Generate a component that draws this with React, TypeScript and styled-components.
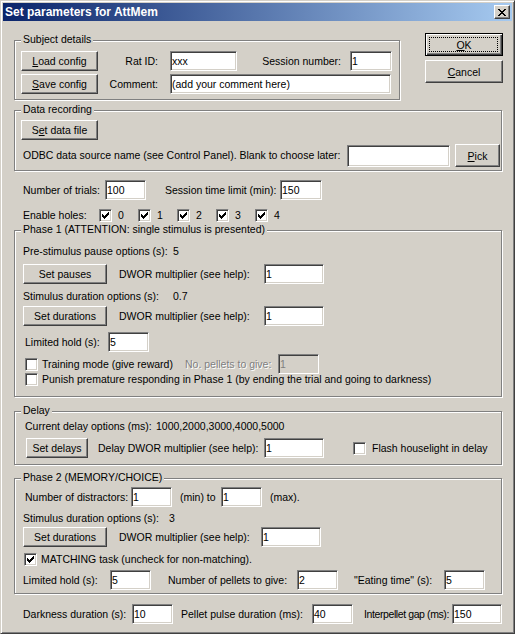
import React from 'react';
import styled, { createGlobalStyle, css } from 'styled-components';

const FACE = '#d4d0c8';

const GlobalStyle = createGlobalStyle`
  html, body {
    margin: 0;
    padding: 0;
    background: ${FACE};
  }
  body {
    font-family: 'Liberation Sans', Arial, sans-serif;
    font-size: 10.5px;
    color: #000;
  }
  * {
    box-sizing: border-box;
  }
`;

const Window = styled.div`
  width: 515px;
  height: 634px;
  background: ${FACE};
  border: 1px solid;
  border-color: ${FACE} #404040 #404040 ${FACE};
  box-shadow: inset 1px 1px #fff, inset -1px -1px #808080;
  padding: 2px;
  display: flex;
  flex-direction: column;
`;

const TitleBar = styled.div`
  flex: none;
  height: 18px;
  background: linear-gradient(to right, #0a246a, #a6caf0);
  display: flex;
  align-items: center;
  justify-content: space-between;
  padding: 0 2px 0 2px;
`;

const Title = styled.span`
  color: #fff;
  font-weight: bold;
  font-size: 12px;
  line-height: 14px;
`;

const CloseButton = styled.div`
  width: 16px;
  height: 14px;
  background: ${FACE};
  border: 1px solid;
  border-color: #fff #404040 #404040 #fff;
  box-shadow: inset -1px -1px #808080;
  display: flex;
  align-items: center;
  justify-content: center;
  padding-right: 1px;
`;

const Client = styled.div`
  flex: 1;
  display: flex;
  flex-direction: column;
  padding-left: 11px;
`;

const TopRow = styled.div`
  display: flex;
  align-items: flex-start;
`;

const ButtonColumn = styled.div`
  display: flex;
  flex-direction: column;
  gap: 4px;
  margin-top: 12px;
  margin-left: 25px;
`;

type GroupProps = { $w: number; $mt: number; $pt: number; $pb: number; $pl: number };

const Group = styled.div<GroupProps>`
  position: relative;
  flex: none;
  width: ${(p) => p.$w}px;
  margin-top: ${(p) => p.$mt}px;
  padding: ${(p) => p.$pt}px 0 ${(p) => p.$pb}px ${(p) => p.$pl}px;
  border: 1px solid #808080;
  box-shadow: inset 1px 1px #fff, 1px 1px #fff;
`;

const GroupLabel = styled.span`
  position: absolute;
  top: -8px;
  left: 6px;
  padding: 0 2px;
  line-height: 13px;
  background: ${FACE};
  white-space: nowrap;
`;

type RowProps = { $h?: number; $mt?: number; $ml?: number };

const Row = styled.div<RowProps>`
  flex: none;
  display: flex;
  align-items: center;
  white-space: nowrap;
  height: ${(p) => p.$h ?? 20}px;
  margin-top: ${(p) => p.$mt ?? 0}px;
  margin-left: ${(p) => p.$ml ?? 0}px;
`;

type LabelProps = { $w?: number; $ml?: number; $right?: boolean; $disabled?: boolean; $tight?: boolean };

const Label = styled.span<LabelProps>`
  flex: none;
  line-height: 13px;
  width: ${(p) => (p.$w ? `${p.$w}px` : 'auto')};
  margin-left: ${(p) => p.$ml ?? 0}px;
  text-align: ${(p) => (p.$right ? 'right' : 'left')};
  letter-spacing: ${(p) => (p.$tight ? '-0.4px' : 'normal')};
  ${(p) =>
    p.$disabled &&
    css`
      color: #808080;
      text-shadow: 1px 1px #fff;
    `}
`;

type FieldProps = { $w: number; $h?: number; $ml?: number };

const Field = styled.input.attrs({ type: 'text', spellCheck: false })<FieldProps>`
  flex: none;
  width: ${(p) => p.$w}px;
  height: ${(p) => p.$h ?? 20}px;
  margin: 0 0 0 ${(p) => p.$ml ?? 0}px;
  padding: 0 1px;
  font: inherit;
  color: #000;
  background: #fff;
  border: 1px solid;
  border-color: #808080 #fff #fff #808080;
  box-shadow: inset 1px 1px #404040, inset -1px -1px ${FACE};
  border-radius: 0;
  outline: none;

  &:disabled {
    background: ${FACE};
    color: #808080;
  }
`;

type ButtonProps = { $w: number; $h?: number; $ml?: number; $default?: boolean };

const Button = styled.button<ButtonProps>`
  position: relative;
  flex: none;
  width: ${(p) => p.$w}px;
  height: ${(p) => p.$h ?? 20}px;
  margin: 0 0 0 ${(p) => p.$ml ?? 0}px;
  padding: 0;
  font: inherit;
  color: #000;
  background: ${FACE};
  border-radius: 0;
  ${(p) =>
    p.$default
      ? css`
          border: 1px solid #000;
          box-shadow: inset 1px 1px #fff, inset -1px -1px #404040, inset -2px -2px #808080;

          &::before {
            content: '';
            position: absolute;
            inset: 3px 4px 3px 3px;
            border: 1px dotted #000;
          }
        `
      : css`
          border: 1px solid;
          border-color: #fff #404040 #404040 #fff;
          box-shadow: inset -1px -1px #808080;
        `}
`;

const CheckBox = styled.span<{ $ml?: number }>`
  flex: none;
  width: 13px;
  height: 13px;
  margin-left: ${(p) => p.$ml ?? 0}px;
  background: #fff;
  border: 1px solid;
  border-color: #808080 #fff #fff #808080;
  box-shadow: inset 1px 1px #404040, inset -1px -1px ${FACE};
  display: flex;
  align-items: center;
  justify-content: center;
`;

const HoleItem = styled.span`
  flex: none;
  width: 39px;
  display: flex;
  align-items: center;
`;

const CHECK_COLS = [2, 3, 4, 3, 2, 1, 0];

function Check({ checked, ml }: { checked?: boolean; ml?: number }) {
  return (
    <CheckBox $ml={ml}>
      {checked && (
        <svg width="7" height="7" viewBox="0 0 7 7" shapeRendering="crispEdges">
          {CHECK_COLS.map((top, i) => (
            <rect key={i} x={i} y={top} width="1" height="3" fill="#000" />
          ))}
        </svg>
      )}
    </CheckBox>
  );
}

const X_ROWS = [
  [0, 1, 6, 7],
  [1, 2, 5, 6],
  [2, 3, 4, 5],
  [3, 4],
  [2, 3, 4, 5],
  [1, 2, 5, 6],
  [0, 1, 6, 7],
];

function CloseGlyph() {
  return (
    <svg width="8" height="7" viewBox="0 0 8 7" shapeRendering="crispEdges">
      {X_ROWS.flatMap((cols, y) => cols.map((x) => <rect key={`${x}-${y}`} x={x} y={y} width="1" height="1" fill="#000" />))}
    </svg>
  );
}

export default function App() {
  return (
    <>
      <GlobalStyle />
      <Window>
        <TitleBar>
          <Title>Set parameters for AttMem</Title>
          <CloseButton>
            <CloseGlyph />
          </CloseButton>
        </TitleBar>
        <Client>
          <TopRow>
            <Group $w={386} $mt={19} $pt={10} $pb={5} $pl={6}>
              <GroupLabel>Subject details</GroupLabel>
              <Row>
                <Button $w={77}>
                  <u>L</u>oad config
                </Button>
                <Label $w={60} $right>
                  Rat ID:
                </Label>
                <Field $w={67} $ml={12} defaultValue="xxx" />
                <Label $w={104} $right>
                  Session number:
                </Label>
                <Field $w={42} $ml={9} defaultValue="1" />
              </Row>
              <Row $mt={3}>
                <Button $w={77}>
                  <u>S</u>ave config
                </Button>
                <Label $w={60} $right>
                  Comment:
                </Label>
                <Field $w={221} $ml={12} defaultValue="(add your comment here)" />
              </Row>
            </Group>
            <ButtonColumn>
              <Button $w={78} $h={23} $default>
                <u>O</u>K
              </Button>
              <Button $w={78} $h={23}>
                <u>C</u>ancel
              </Button>
            </ButtonColumn>
          </TopRow>

          <Group $w={488} $mt={10} $pt={9} $pb={3} $pl={6}>
            <GroupLabel>Data recording</GroupLabel>
            <Row>
              <Button $w={77}>
                S<u>e</u>t data file
              </Button>
            </Row>
            <Row $h={23} $mt={4}>
              <Label $w={324} $ml={2}>
                ODBC data source name (see Control Panel). Blank to choose later:
              </Label>
              <Field $w={103} $h={22} defaultValue="" />
              <Button $w={45} $h={23} $ml={5}>
                <u>P</u>ick
              </Button>
            </Row>
          </Group>

          <Row $mt={9} $ml={9}>
            <Label $w={82}>Number of trials:</Label>
            <Field $w={41} defaultValue="100" />
            <Label $w={115} $ml={19}>
              Session time limit (min):
            </Label>
            <Field $w={42} defaultValue="150" />
          </Row>

          <Row $h={13} $mt={9} $ml={9}>
            <Label $w={76}>Enable holes:</Label>
            {[0, 1, 2, 3, 4].map((n) => (
              <HoleItem key={n}>
                <Check checked />
                <Label $ml={6}>{n}</Label>
              </HoleItem>
            ))}
          </Row>

          <Group $w={488} $mt={8} $pt={14} $pb={10} $pl={8}>
            <GroupLabel>Phase 1 (ATTENTION: single stimulus is presented)</GroupLabel>
            <Row $h={13}>
              <Label $w={150}>Pre-stimulus pause options (s):</Label>
              <Label>5</Label>
            </Row>
            <Row $mt={6}>
              <Button $w={84}>Set pauses</Button>
              <Label $w={145} $ml={12}>
                DWOR multiplier (see help):
              </Label>
              <Field $w={60} defaultValue="1" />
            </Row>
            <Row $h={13} $mt={6}>
              <Label $w={150}>Stimulus duration options (s):</Label>
              <Label>0.7</Label>
            </Row>
            <Row $mt={3}>
              <Button $w={84}>Set durations</Button>
              <Label $w={145} $ml={12}>
                DWOR multiplier (see help):
              </Label>
              <Field $w={60} defaultValue="1" />
            </Row>
            <Row $mt={6} $ml={2}>
              <Label $w={83}>Limited hold (s):</Label>
              <Field $w={41} defaultValue="5" />
            </Row>
            <Row $mt={2} $ml={2}>
              <Check />
              <Label $w={143} $ml={4}>
                Training mode (give reward)
              </Label>
              <Label $w={93} $disabled>
                No. pellets to give:
              </Label>
              <Field $w={41} defaultValue="1" disabled />
            </Row>
            <Row $h={13} $mt={-1} $ml={2}>
              <Check />
              <Label $ml={4}>Punish premature responding in Phase 1 (by ending the trial and going to darkness)</Label>
            </Row>
          </Group>

          <Group $w={488} $mt={14} $pt={8} $pb={6} $pl={10}>
            <GroupLabel>Delay</GroupLabel>
            <Row $h={13}>
              <Label $w={131}>Current delay options (ms):</Label>
              <Label>1000,2000,3000,4000,5000</Label>
            </Row>
            <Row $mt={5}>
              <Button $w={62} $ml={1}>
                Set delays
              </Button>
              <Label $w={166} $ml={10}>
                Delay DWOR multiplier (see help):
              </Label>
              <Field $w={60} defaultValue="1" />
              <Check ml={29} />
              <Label $ml={6}>Flash houselight in delay</Label>
            </Row>
          </Group>

          <Group $w={488} $mt={13} $pt={8} $pb={3} $pl={8}>
            <GroupLabel>Phase 2 (MEMORY/CHOICE)</GroupLabel>
            <Row $ml={2}>
              <Label $w={106}>Number of distractors:</Label>
              <Field $w={41} defaultValue="1" />
              <Label $w={41} $ml={8}>
                (min) to
              </Label>
              <Field $w={41} defaultValue="1" />
              <Label $ml={8}>(max).</Label>
            </Row>
            <Row $h={13} $mt={5}>
              <Label $w={146}>Stimulus duration options (s):</Label>
              <Label>3</Label>
            </Row>
            <Row $mt={2}>
              <Button $w={84}>Set durations</Button>
              <Label $w={142} $ml={12}>
                DWOR multiplier (see help):
              </Label>
              <Field $w={60} defaultValue="1" />
            </Row>
            <Row $h={13} $mt={6} $ml={1}>
              <Check checked />
              <Label $ml={4}>MATCHING task (uncheck for non-matching).</Label>
            </Row>
            <Row $mt={4}>
              <Label $w={87}>Limited hold (s):</Label>
              <Field $w={41} defaultValue="5" />
              <Label $w={129} $ml={17}>
                Number of pellets to give:
              </Label>
              <Field $w={41} defaultValue="2" />
              <Label $w={90} $ml={16}>
                "Eating time" (s):
              </Label>
              <Field $w={41} defaultValue="5" />
            </Row>
          </Group>

          <Row $mt={10} $ml={9}>
            <Label $w={109}>Darkness duration (s):</Label>
            <Field $w={41} defaultValue="10" />
            <Label $w={131} $ml={8}>
              Pellet pulse duration (ms):
            </Label>
            <Field $w={41} defaultValue="40" />
            <Label $w={88} $ml={11} $tight>
              Interpellet gap (ms):
            </Label>
            <Field $w={50} defaultValue="150" />
          </Row>
        </Client>
      </Window>
    </>
  );
}
